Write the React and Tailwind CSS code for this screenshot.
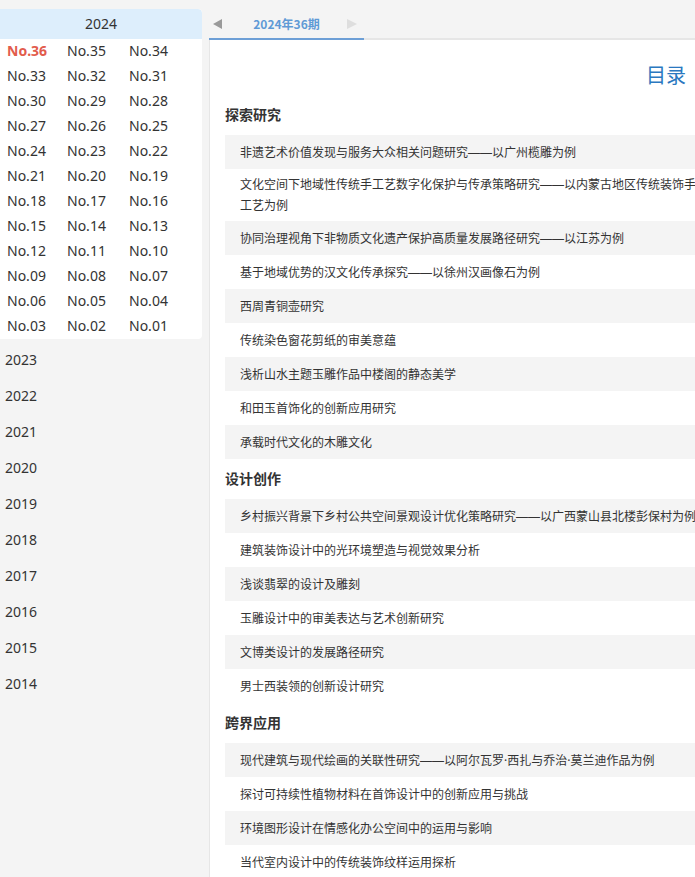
import React from "react";

const nums = [];
for (let i = 36; i >= 1; i--) nums.push(i < 10 ? "0" + i : "" + i);

const years = ["2023", "2022", "2021", "2020", "2019", "2018", "2017", "2016", "2015", "2014"];

const sections = [
  {
    title: "探索研究",
    items: [
      "非遗艺术价值发现与服务大众相关问题研究——以广州榄雕为例",
      "文化空间下地域性传统手工艺数字化保护与传承策略研究——以内蒙古地区传统装饰手工艺为例",
      "协同治理视角下非物质文化遗产保护高质量发展路径研究——以江苏为例",
      "基于地域优势的汉文化传承探究——以徐州汉画像石为例",
      "西周青铜壶研究",
      "传统染色窗花剪纸的审美意蕴",
      "浅析山水主题玉雕作品中楼阁的静态美学",
      "和田玉首饰化的创新应用研究",
      "承载时代文化的木雕文化",
    ],
  },
  {
    title: "设计创作",
    items: [
      "乡村振兴背景下乡村公共空间景观设计优化策略研究——以广西蒙山县北楼彭保村为例",
      "建筑装饰设计中的光环境塑造与视觉效果分析",
      "浅谈翡翠的设计及雕刻",
      "玉雕设计中的审美表达与艺术创新研究",
      "文博类设计的发展路径研究",
      "男士西装领的创新设计研究",
    ],
  },
  {
    title: "跨界应用",
    items: [
      "现代建筑与现代绘画的关联性研究——以阿尔瓦罗·西扎与乔治·莫兰迪作品为例",
      "探讨可持续性植物材料在首饰设计中的创新应用与挑战",
      "环境图形设计在情感化办公空间中的运用与影响",
      "当代室内设计中的传统装饰纹样运用探析",
    ],
  },
];

const font = { fontFamily: '"Noto Sans", "Noto Sans CJK SC", sans-serif' };
const cjk = { fontFamily: '"Noto Sans CJK SC", "Noto Sans", sans-serif' };

function renderText(t) {
  return t.split(/(——|·)/).map((part, i) => {
    if (part === "——")
      return (
        <span key={i} className="font-['Liberation_Sans'] leading-none">
          ——
        </span>
      );
    if (part === "·")
      return (
        <span key={i} className="font-['Noto_Sans'] leading-none">
          ·
        </span>
      );
    return <React.Fragment key={i}>{part}</React.Fragment>;
  });
}

export default function App() {
  return (
    <div className="w-[695px] h-[877px] overflow-hidden flex bg-[#f4f4f4] text-[#333]" style={font}>
      {/* Sidebar */}
      <div className="w-[209px] shrink-0 pt-[9px]">
        <div className="w-[202px] bg-white rounded-r-[4px] overflow-hidden">
          <div className="h-[30px] pb-[1px] bg-[#ddeefc] rounded-tr-[4px] flex items-center justify-center text-[14px] text-[#333]">
            2024
          </div>
          <div className="grid grid-cols-[60px_62px_80px]">
            {nums.map((n, i) => (
              <div
                key={n}
                className={
                  "h-[25px] leading-[24px] pl-[7px] text-[14px] " +
                  (i === 0 ? "font-bold text-[#e25c4c]" : "text-[#333]")
                }
              >
                No.{n}
              </div>
            ))}
          </div>
        </div>
        <div className="pt-[3px]">
          {years.map((y) => (
            <div key={y} className="h-[36px] leading-[35px] pl-[5px] text-[14px] text-[#333]">
              {y}
            </div>
          ))}
        </div>
      </div>

      {/* Main panel */}
      <div className="w-[520px] shrink-0 flex flex-col">
        <div className="h-[40px] border-b-2 border-[#e6e6e6] flex">
          <div className="w-[155px] h-[40px] -mb-[2px] border-b-2 border-[#6d9fd6] flex items-center pt-[10px] pl-[4px] pr-[7px]">
            <svg width="9" height="10" viewBox="0 0 9 10" className="shrink-0">
              <polygon points="9,0 9,10 0,5" fill="#9a9a9a" />
            </svg>
            <div className="ml-[4px] w-[121px] text-center text-[12px] font-bold text-[#5f9ad6]" style={cjk}>
              2024年36期
            </div>
            <svg width="10" height="10" viewBox="0 0 10 10" className="shrink-0">
              <polygon points="0,0 0,10 10,5" fill="#dedede" />
            </svg>
          </div>
        </div>
        <div className="flex-1 bg-white border-l border-[#e6e6e6] pl-[15px]" style={cjk}>
          <div className="w-[490px]">
            <div className="h-[55px] pt-[20px] flex justify-end pr-[29px]">
              <div className="text-[20px] leading-[30px] text-[#2a78c0]">目录</div>
            </div>
            {sections.map((s) => (
              <div key={s.title}>
                <div className="h-[40px] leading-[38px] text-[14px] font-bold text-[#333]">{s.title}</div>
                {s.items.map((it, i) => (
                  <div
                    key={it}
                    className={
                      "pl-[15px] pr-[15px] text-[12px] leading-[21px] text-[#333] " +
                      (it.startsWith("文化空间") ? "pt-[4px] pb-[6px] " : "pt-[5.5px] pb-[7.5px] ") +
                      (i % 2 === 0 ? "bg-[#f4f4f4]" : "bg-white")
                    }
                  >
                    {renderText(it)}
                  </div>
                ))}
              </div>
            ))}
          </div>
        </div>
      </div>
    </div>
  );
}
